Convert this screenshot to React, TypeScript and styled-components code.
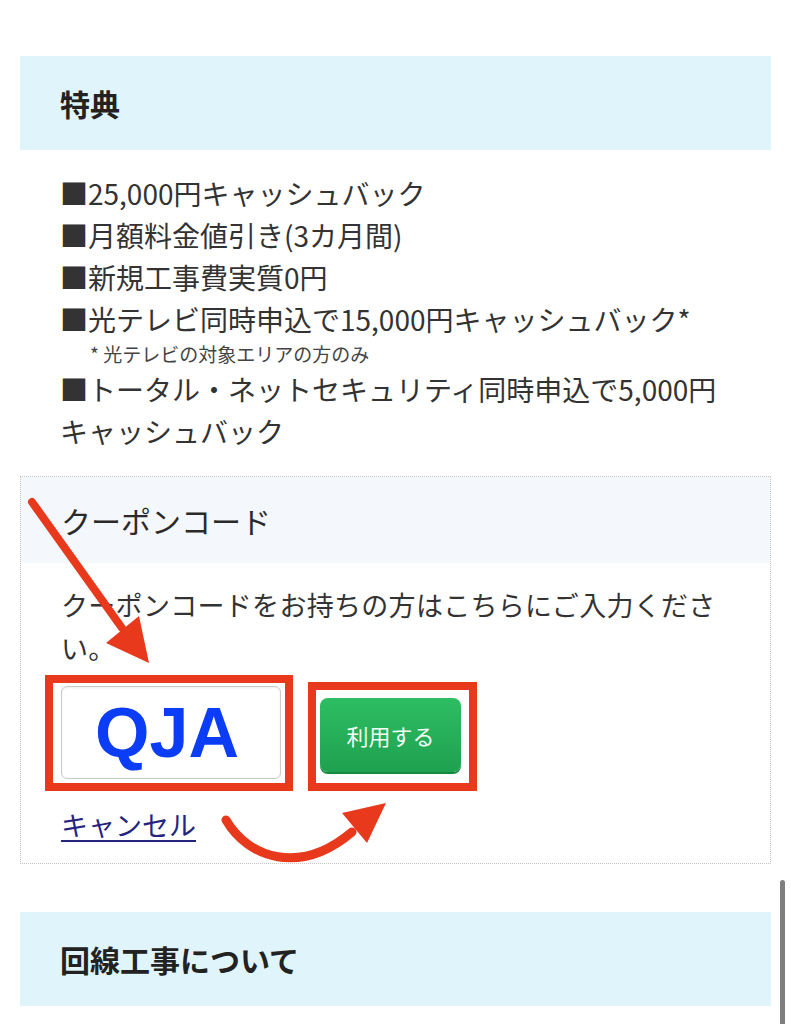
import * as React from 'react';
import { styled, createGlobalStyle } from 'styled-components';

const GlobalStyle = createGlobalStyle`
  html, body {
    margin: 0;
    padding: 0;
    background: #ffffff;
  }
  body {
    font-family: 'Noto Sans CJK JP', 'Liberation Sans', sans-serif;
    color: #333333;
  }
`;

const Page = styled.div`
  position: relative;
  width: 791px;
  height: 1024px;
  overflow: hidden;
  box-sizing: border-box;
  padding: 56px 20px 0;
`;

const SectionHeader = styled.div`
  display: flex;
  align-items: center;
  height: 94px;
  padding: 0 40px;
  background-color: #e0f4fb;
  font-size: 30px;
  font-weight: 700;
  color: #222222;
`;

const BenefitList = styled.ul`
  margin: 22px 0 24px;
  padding: 0 40px;
  list-style: none;
`;

const BenefitItem = styled.li`
  font-size: 28px;
  line-height: 42px;
  color: #333333;
`;

const Note = styled.li`
  padding-left: 30px;
  font-size: 19px;
  line-height: 28px;
  color: #444444;
`;

const CouponBox = styled.div`
  border: 1px dotted #c4c4c4;
`;

const CouponHead = styled.div`
  display: flex;
  align-items: center;
  height: 86px;
  padding: 0 40px;
  background-color: #f4f8fc;
  font-size: 30px;
  color: #2a2a2a;
`;

const CouponBody = styled.div`
  padding: 20px 40px 18px;
`;

const Lead = styled.p`
  margin: 0;
  font-size: 27px;
  line-height: 43px;
  letter-spacing: 0.3px;
  color: #333333;
`;

const FormRow = styled.div`
  display: flex;
  align-items: flex-end;
  gap: 15px;
  margin: 6px 0 0 -16px;
`;

const Highlight = styled.div<{ $pad: string }>`
  display: flex;
  border: 8px solid #e8391d;
  padding: ${(p) => p.$pad};
`;

const CodeInput = styled.input`
  box-sizing: border-box;
  width: 220px;
  height: 93px;
  margin: 0;
  padding: 0 8px 0 0;
  border: 1px solid #c9c9c9;
  border-radius: 6px;
  background: #ffffff;
  box-shadow: inset 0 1px 2px rgba(0, 0, 0, 0.08);
  font-family: 'Liberation Sans', Arial, sans-serif;
  font-size: 70px;
  font-weight: 700;
  color: #0b3cf6;
  text-align: center;
  outline: none;
`;

const ApplyButton = styled.button`
  width: 141px;
  height: 74px;
  border: none;
  border-radius: 8px;
  background: linear-gradient(#2dbd62, #1fa150);
  box-shadow: 0 2px 0 #16893f;
  font-family: 'Noto Sans CJK JP', sans-serif;
  font-size: 22px;
  color: #f4fff6;
  cursor: pointer;
`;

const CancelLink = styled.a`
  display: inline-block;
  margin-top: 14px;
  font-size: 27px;
  line-height: 40px;
  color: #24247f;
  text-decoration: underline;
  text-underline-offset: 4px;
  cursor: pointer;
`;

const NextHeader = styled(SectionHeader)`
  margin-top: 48px;
`;

const Overlay = styled.svg`
  position: absolute;
  left: 0;
  top: 0;
  pointer-events: none;
`;

const ScrollThumb = styled.div`
  position: absolute;
  left: 780px;
  top: 880px;
  width: 5px;
  height: 160px;
  border-radius: 3px;
  background-color: #7f7f7f;
`;

const RED = '#e8391d';

function App() {
  return (
    <Page>
      <GlobalStyle />
      <SectionHeader>特典</SectionHeader>
      <BenefitList>
        <BenefitItem>■25,000円キャッシュバック</BenefitItem>
        <BenefitItem>■月額料金値引き(3カ月間)</BenefitItem>
        <BenefitItem>■新規工事費実質0円</BenefitItem>
        <BenefitItem>■光テレビ同時申込で15,000円キャッシュバック*</BenefitItem>
        <Note>* 光テレビの対象エリアの方のみ</Note>
        <BenefitItem>
          ■トータル・ネットセキュリティ同時申込で5,000円
          <br />
          キャッシュバック
        </BenefitItem>
      </BenefitList>

      <CouponBox>
        <CouponHead>クーポンコード</CouponHead>
        <CouponBody>
          <Lead>
            クーポンコードをお持ちの方はこちらにご入力くださ
            <br />
            い。
          </Lead>
          <FormRow>
            <Highlight $pad="3px 4px 4px 8px">
              <CodeInput value="QJA" readOnly />
            </Highlight>
            <Highlight $pad="8px 8px 11px 4px">
              <ApplyButton>利用する</ApplyButton>
            </Highlight>
          </FormRow>
          <CancelLink>キャンセル</CancelLink>
        </CouponBody>
      </CouponBox>

      <NextHeader>回線工事について</NextHeader>

      {/* annotation arrows */}
      <Overlay width="791" height="1024" viewBox="0 0 791 1024">
        <line x1="32" y1="502" x2="122" y2="628" stroke={RED} strokeWidth="8" strokeLinecap="round" />
        <polygon points="149,663 106,643 139,616" fill={RED} />
        <path d="M226 820 C 248 858, 300 876, 352 832" fill="none" stroke={RED} strokeWidth="9" strokeLinecap="round" />
        <polygon points="386,803 342,813 367,843" fill={RED} />
      </Overlay>
      <ScrollThumb />
    </Page>
  );
}

export default App;
